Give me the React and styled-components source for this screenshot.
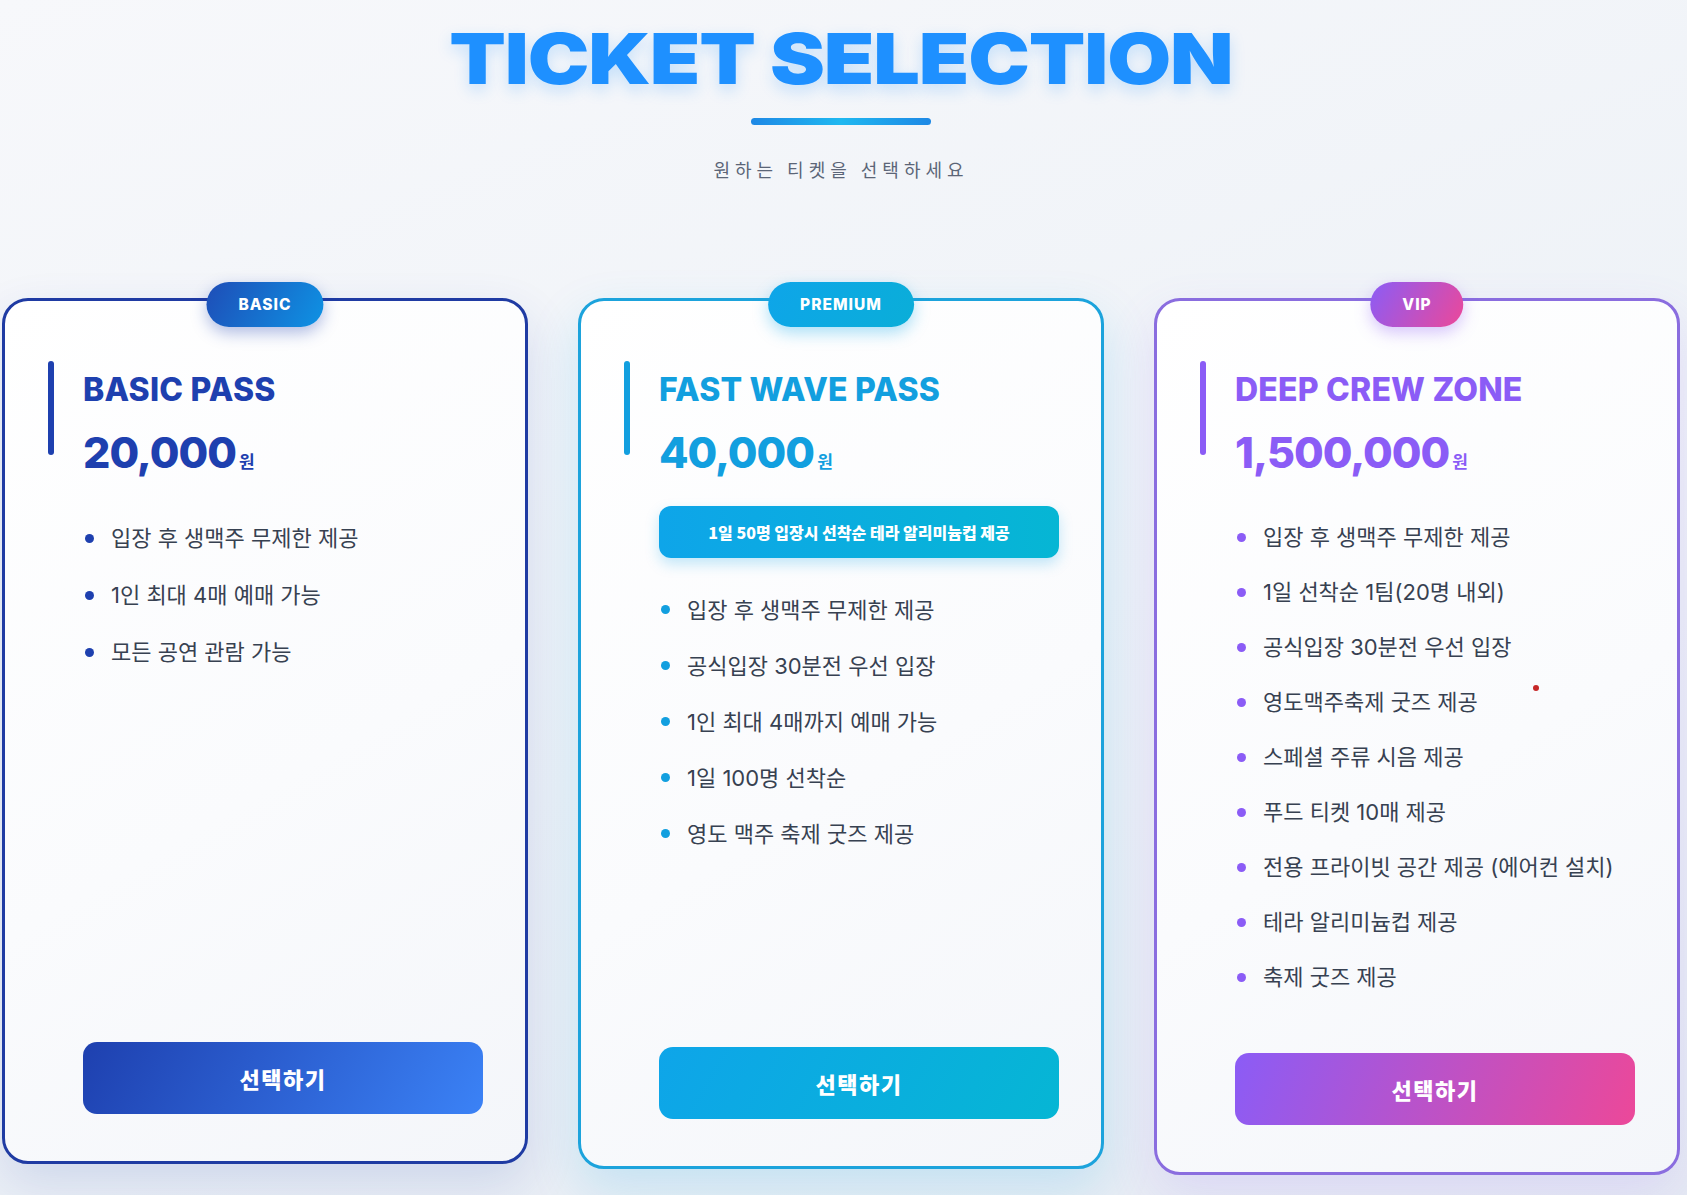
import React from "react";
import styled, { createGlobalStyle } from "styled-components";

const GlobalStyle = createGlobalStyle`
  body {
    margin: 0;
    background: linear-gradient(160deg, #f7f8fb 0%, #eef2f7 55%, #e6ebf3 100%);
    font-family: "Inter", "Noto Sans CJK KR", sans-serif;
    color: #374151;
  }
`;

const themes = {
  basic: {
    main: "#1e40af",
    border: "#1f3ba3",
    badge: "linear-gradient(120deg, #1e4db7 0%, #0e93e4 100%)",
    button: "linear-gradient(120deg, #1e40af 0%, #3b82f6 100%)",
    shadow: "rgba(30, 64, 175, 0.14)",
  },
  premium: {
    main: "#129fdf",
    border: "#1ca3dc",
    badge: "linear-gradient(120deg, #0ea5e9 0%, #0aaed8 100%)",
    button: "linear-gradient(120deg, #0ea5e9 0%, #06b6d4 100%)",
    shadow: "rgba(14, 165, 233, 0.17)",
  },
  vip: {
    main: "#8b5cf6",
    border: "#8a6ddf",
    badge: "linear-gradient(120deg, #8b5cf6 0%, #ec4899 100%)",
    button: "linear-gradient(110deg, #8b5cf6 0%, #ec4899 100%)",
    shadow: "rgba(139, 92, 246, 0.14)",
  },
};

const Page = styled.div`
  min-height: 100vh;
  padding: 17px 7px 0 2px;
  box-sizing: border-box;
`;

const Header = styled.header`
  text-align: center;
`;

const Title = styled.h1`
  display: inline-block;
  margin: 0;
  font-family: "Inter", sans-serif;
  font-weight: 900;
  font-size: 70px;
  line-height: 84px;
  letter-spacing: -1px;
  color: #1e90ff;
  transform: scaleX(1.18);
  text-shadow: 0 6px 14px rgba(30, 144, 255, 0.22);
`;

const Underline = styled.div`
  width: 180px;
  height: 7px;
  margin: 17px auto 0;
  border-radius: 4px;
  background: linear-gradient(90deg, #1e88e5 0%, #1fb8f0 50%, #1e88e5 100%);
`;

const Subtitle = styled.p`
  margin: 31px 0 0;
  font-family: "Noto Sans CJK KR", sans-serif;
  font-size: 18px;
  letter-spacing: 5px;
  color: #5b6577;
`;

const Grid = styled.div`
  display: grid;
  grid-template-columns: repeat(3, 526px);
  gap: 50px;
  margin-top: 116px;
  align-items: start;
`;

const Card = styled.div`
  position: relative;
  box-sizing: border-box;
  min-height: ${(p) => p.$minHeight}px;
  display: flex;
  flex-direction: column;
  padding: 60px 42px 47px 43px;
  border: 3px solid ${(p) => p.$theme.border};
  border-radius: 26px;
  background: linear-gradient(150deg, #ffffff 0%, #fafbfd 55%, #f4f6fa 100%);
  box-shadow: 0 20px 50px ${(p) => p.$theme.shadow};
`;

const Badge = styled.div`
  position: absolute;
  top: -19px;
  left: 50%;
  transform: translateX(-50%);
  height: 45px;
  line-height: 45px;
  padding: 0 32px;
  border-radius: 23px;
  background: ${(p) => p.$theme.badge};
  color: #fff;
  font-size: 15.5px;
  font-weight: 800;
  letter-spacing: 1px;
  white-space: nowrap;
  box-shadow: 0 6px 16px ${(p) => p.$theme.shadow.replace(/0\.1\d\)/, "0.35)")};
`;

const HeadRow = styled.div`
  display: flex;
  gap: 29px;
  margin-bottom: 33px;
`;

const Accent = styled.div`
  flex: none;
  width: 6px;
  height: 94px;
  border-radius: 3px;
  background: ${(p) => p.$color};
`;

const HeadText = styled.div`
  padding-top: 10px;
  color: ${(p) => p.$color};
`;

const PassName = styled.h2`
  margin: 0;
  font-size: 32px;
  font-weight: 800;
  line-height: 1.2;
  letter-spacing: 0.2px;
`;

const Price = styled.div`
  margin-top: 20px;
  font-size: 43px;
  font-weight: 800;
  line-height: 1.1;
  letter-spacing: -1px;

  span {
    font-family: "Noto Sans CJK KR", sans-serif;
    font-size: 17px;
    font-weight: 700;
    letter-spacing: 0;
    margin-left: 3px;
  }
`;

const Body = styled.div`
  flex: 1;
  display: flex;
  flex-direction: column;
  margin-left: 35px;
`;

const Highlight = styled.div`
  margin: -4px 0 24px;
  height: 52px;
  line-height: 52px;
  border-radius: 12px;
  background: linear-gradient(90deg, #0ea5e9 0%, #06b6d4 100%);
  color: #fff;
  text-align: center;
  font-family: "Noto Sans CJK KR", sans-serif;
  font-size: 16px;
  font-weight: 800;
  box-shadow: 0 6px 14px rgba(14, 165, 233, 0.25);
`;

const List = styled.ul`
  list-style: none;
  margin: 0;
  padding: 0 0 0 2px;
`;

const Item = styled.li`
  display: flex;
  align-items: center;
  gap: 17px;
  padding: ${(p) => p.$pad}px 0;
  font-size: 22px;
  line-height: 28px;
  color: #374151;
`;

const Dot = styled.span`
  flex: none;
  width: 9px;
  height: 9px;
  border-radius: 50%;
  background: ${(p) => p.$color};
`;

const SelectButton = styled.button`
  margin-top: auto;
  height: 72px;
  width: 100%;
  border: none;
  border-radius: 14px;
  background: ${(p) => p.$theme.button};
  color: #fff;
  font-family: "Noto Sans CJK KR", sans-serif;
  font-size: 22px;
  font-weight: 800;
  letter-spacing: 1.5px;
  cursor: pointer;
`;

const Spacer = styled.div`
  height: 38px;
  flex: none;
`;

const RedDot = styled.span`
  position: absolute;
  left: 376px;
  top: 384px;
  width: 6px;
  height: 6px;
  border-radius: 50%;
  background: #c62828;
`;

const tickets = [
  {
    key: "basic",
    badge: "BASIC",
    name: "BASIC PASS",
    price: "20,000",
    minHeight: 866,
    pad: 14.5,
    features: ["입장 후 생맥주 무제한 제공", "1인 최대 4매 예매 가능", "모든 공연 관람 가능"],
  },
  {
    key: "premium",
    badge: "PREMIUM",
    name: "FAST WAVE PASS",
    price: "40,000",
    minHeight: 871,
    pad: 14,
    highlight: "1일 50명 입장시 선착순 테라 알리미늄컵 제공",
    features: [
      "입장 후 생맥주 무제한 제공",
      "공식입장 30분전 우선 입장",
      "1인 최대 4매까지 예매 가능",
      "1일 100명 선착순",
      "영도 맥주 축제 굿즈 제공",
    ],
  },
  {
    key: "vip",
    badge: "VIP",
    name: "DEEP CREW ZONE",
    price: "1,500,000",
    minHeight: 877,
    pad: 13.5,
    dot: true,
    features: [
      "입장 후 생맥주 무제한 제공",
      "1일 선착순 1팀(20명 내외)",
      "공식입장 30분전 우선 입장",
      "영도맥주축제 굿즈 제공",
      "스페셜 주류 시음 제공",
      "푸드 티켓 10매 제공",
      "전용 프라이빗 공간 제공 (에어컨 설치)",
      "테라 알리미늄컵 제공",
      "축제 굿즈 제공",
    ],
  },
];

const App = () => {
  return (
    <>
      <GlobalStyle />
      <Page>
        <Header>
          <Title>TICKET SELECTION</Title>
          <Underline />
          <Subtitle>원하는 티켓을 선택하세요</Subtitle>
        </Header>

        <Grid>
          {tickets.map((t) => {
            const theme = themes[t.key];
            return (
              <Card key={t.key} $theme={theme} $minHeight={t.minHeight}>
                <Badge $theme={theme}>{t.badge}</Badge>
                {t.dot && <RedDot />}
                <HeadRow>
                  <Accent $color={theme.main} />
                  <HeadText $color={theme.main}>
                    <PassName>{t.name}</PassName>
                    <Price>
                      {t.price}
                      <span>원</span>
                    </Price>
                  </HeadText>
                </HeadRow>
                <Body>
                  {t.highlight && <Highlight>{t.highlight}</Highlight>}
                  <List>
                    {t.features.map((f) => (
                      <Item key={f} $pad={t.pad}>
                        <Dot $color={theme.main} />
                        {f}
                      </Item>
                    ))}
                  </List>
                  <Spacer />
                  <SelectButton $theme={theme}>선택하기</SelectButton>
                </Body>
              </Card>
            );
          })}
        </Grid>
      </Page>
    </>
  );
};

export default App;
